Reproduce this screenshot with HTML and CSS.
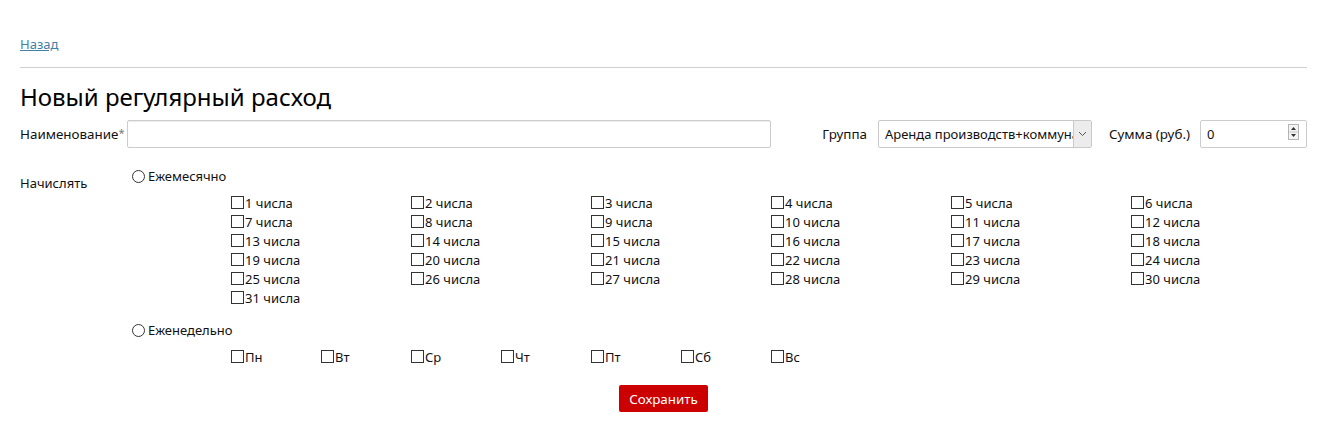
FILE: index.html
```html
<!DOCTYPE html>
<html lang="ru">
<head>
<meta charset="utf-8">
<title>Новый регулярный расход</title>
<link rel="stylesheet" href="styles.css">
</head>
<body>
<div class="page">
  <div class="back"><a href="#">Назад</a></div>
  <hr class="sep">
  <h1 class="title">Новый регулярный расход</h1>
  <div class="top-row">
    <label class="lbl lbl-name">Наименование<span class="req">*</span></label>
    <input class="name-input" type="text">
    <label class="lbl lbl-group">Группа</label>
    <div class="select">
      <span class="select-text">Аренда производств+коммунальные</span>
      <span class="select-arrow"><svg width="9" height="6" viewBox="0 0 9 6"><path d="M1 1 L4.5 4.5 L8 1" fill="none" stroke="#555" stroke-width="1"/></svg></span>
    </div>
    <label class="lbl lbl-sum">Сумма (руб.)</label>
    <div class="num">
      <span class="num-text">0</span>
      <span class="spin"><svg width="11" height="16" viewBox="0 0 11 16"><rect x="0.5" y="0.5" width="10" height="15" fill="#f4f4f4" stroke="#b5b5b5"/><line x1="1" y1="8" x2="10" y2="8" stroke="#c8c8c8"/><path d="M3 6 L5.5 3 L8 6 Z" fill="#333"/><path d="M3 10 L5.5 13 L8 10 Z" fill="#333"/></svg></span>
    </div>
  </div>
  <div class="accrue">
    <div class="accrue-label">Начислять</div>
    <div class="accrue-body">
      <label class="radio-line"><span class="radio"></span>Ежемесячно</label>
      <div class="days">
        <label class="cb"><span class="box"></span>1 числа</label>
        <label class="cb"><span class="box"></span>2 числа</label>
        <label class="cb"><span class="box"></span>3 числа</label>
        <label class="cb"><span class="box"></span>4 числа</label>
        <label class="cb"><span class="box"></span>5 числа</label>
        <label class="cb"><span class="box"></span>6 числа</label>
        <label class="cb"><span class="box"></span>7 числа</label>
        <label class="cb"><span class="box"></span>8 числа</label>
        <label class="cb"><span class="box"></span>9 числа</label>
        <label class="cb"><span class="box"></span>10 числа</label>
        <label class="cb"><span class="box"></span>11 числа</label>
        <label class="cb"><span class="box"></span>12 числа</label>
        <label class="cb"><span class="box"></span>13 числа</label>
        <label class="cb"><span class="box"></span>14 числа</label>
        <label class="cb"><span class="box"></span>15 числа</label>
        <label class="cb"><span class="box"></span>16 числа</label>
        <label class="cb"><span class="box"></span>17 числа</label>
        <label class="cb"><span class="box"></span>18 числа</label>
        <label class="cb"><span class="box"></span>19 числа</label>
        <label class="cb"><span class="box"></span>20 числа</label>
        <label class="cb"><span class="box"></span>21 числа</label>
        <label class="cb"><span class="box"></span>22 числа</label>
        <label class="cb"><span class="box"></span>23 числа</label>
        <label class="cb"><span class="box"></span>24 числа</label>
        <label class="cb"><span class="box"></span>25 числа</label>
        <label class="cb"><span class="box"></span>26 числа</label>
        <label class="cb"><span class="box"></span>27 числа</label>
        <label class="cb"><span class="box"></span>28 числа</label>
        <label class="cb"><span class="box"></span>29 числа</label>
        <label class="cb"><span class="box"></span>30 числа</label>
        <label class="cb"><span class="box"></span>31 числа</label>
      </div>
      <label class="radio-line weekly"><span class="radio"></span>Еженедельно</label>
      <div class="weekdays">
        <label class="cb"><span class="box"></span>Пн</label>
        <label class="cb"><span class="box"></span>Вт</label>
        <label class="cb"><span class="box"></span>Ср</label>
        <label class="cb"><span class="box"></span>Чт</label>
        <label class="cb"><span class="box"></span>Пт</label>
        <label class="cb"><span class="box"></span>Сб</label>
        <label class="cb"><span class="box"></span>Вс</label>
      </div>
    </div>
  </div>
  <div class="actions"><button class="save" type="button">Сохранить</button></div>
</div>
</body>
</html>
```
FILE: styles.css
```css
* { box-sizing: border-box; }
html, body { margin: 0; padding: 0; background: #fff; }
body {
  font-family: "Noto Sans", "Open Sans", sans-serif;
  font-size: 13px;
  color: #111;
}
.page { padding: 0 20px; }
.back { padding-top: 36px; height: 60px; line-height: 17px; }
.back a { color: #3f7fa8; text-decoration: underline; }
.sep { margin: 7px 0 0; border: 0; border-top: 1px solid #cfcfcf; height: 0; }
.title {
  margin: 14px 0 0;
  font-size: 24px;
  font-weight: 400;
  line-height: 30px;
  color: #000;
}
.top-row {
  display: flex;
  align-items: center;
  height: 28px;
  margin-top: 8px;
}
.lbl { white-space: nowrap; font-size: 13.4px; }
.lbl-name { width: 107px; flex: none; }
.req { color: #777; font-size: 11px; vertical-align: top; }
.name-input {
  width: 644px;
  flex: none;
  height: 28px;
  border: 1px solid #ccc;
  border-radius: 2px;
  box-shadow: inset 0 1px 1px rgba(0,0,0,0.08);
  font: inherit;
  padding: 0 6px;
}
.lbl-group { width: 107px; flex: none; text-align: right; padding-right: 11px; }
.select {
  width: 214px;
  flex: none;
  height: 28px;
  border: 1px solid #c9c9c9;
  border-radius: 2px;
  display: flex;
  align-items: center;
  overflow: hidden;
  background: #fff;
}
.select-text {
  flex: 1;
  min-width: 0;
  white-space: nowrap;
  overflow: hidden;
  padding-left: 6px;
}
.select-arrow {
  width: 18px;
  flex: none;
  height: 100%;
  border-left: 1px solid #c9c9c9;
  background: #ececec;
  display: flex;
  align-items: center;
  justify-content: center;
}
.lbl-sum { width: 108px; flex: none; text-align: right; padding-right: 10px; }
.num {
  flex: 1;
  height: 28px;
  border: 1px solid #ccc;
  border-radius: 2px;
  display: flex;
  align-items: center;
  justify-content: space-between;
  padding: 0 7px 0 6px;
}
.accrue { display: flex; margin-top: 19px; }
.accrue-label { width: 112px; padding-top: 8px; line-height: 17px; flex: none; }
.accrue-body { flex: 1; min-width: 0; }
.radio-line { display: flex; align-items: center; height: 19px; line-height: 19px; }
.radio {
  width: 13px; height: 13px;
  border: 1px solid #333;
  border-radius: 50%;
  margin-right: 3px;
}
.days {
  display: grid;
  grid-template-columns: repeat(6, 180px);
  grid-auto-rows: 19px;
  margin-top: 7px;
  margin-left: 99px;
}
.cb { display: flex; align-items: center; white-space: nowrap; }
.box {
  width: 13px; height: 13px;
  border: 1px solid #333;
  margin-right: 1px;
  flex: none;
}
.weekly { margin-top: 14px; }
.weekdays {
  display: grid;
  grid-template-columns: repeat(7, 90px);
  grid-auto-rows: 19px;
  margin-top: 7px;
  margin-left: 99px;
}
.actions { display: flex; justify-content: center; margin-top: 19px; }
.save {
  background: #cc0000;
  color: #fff;
  border: 0;
  border-radius: 2px;
  width: 89px;
  height: 27px;
  font: inherit;
  font-size: 13.4px;
  padding: 0;
}
```
